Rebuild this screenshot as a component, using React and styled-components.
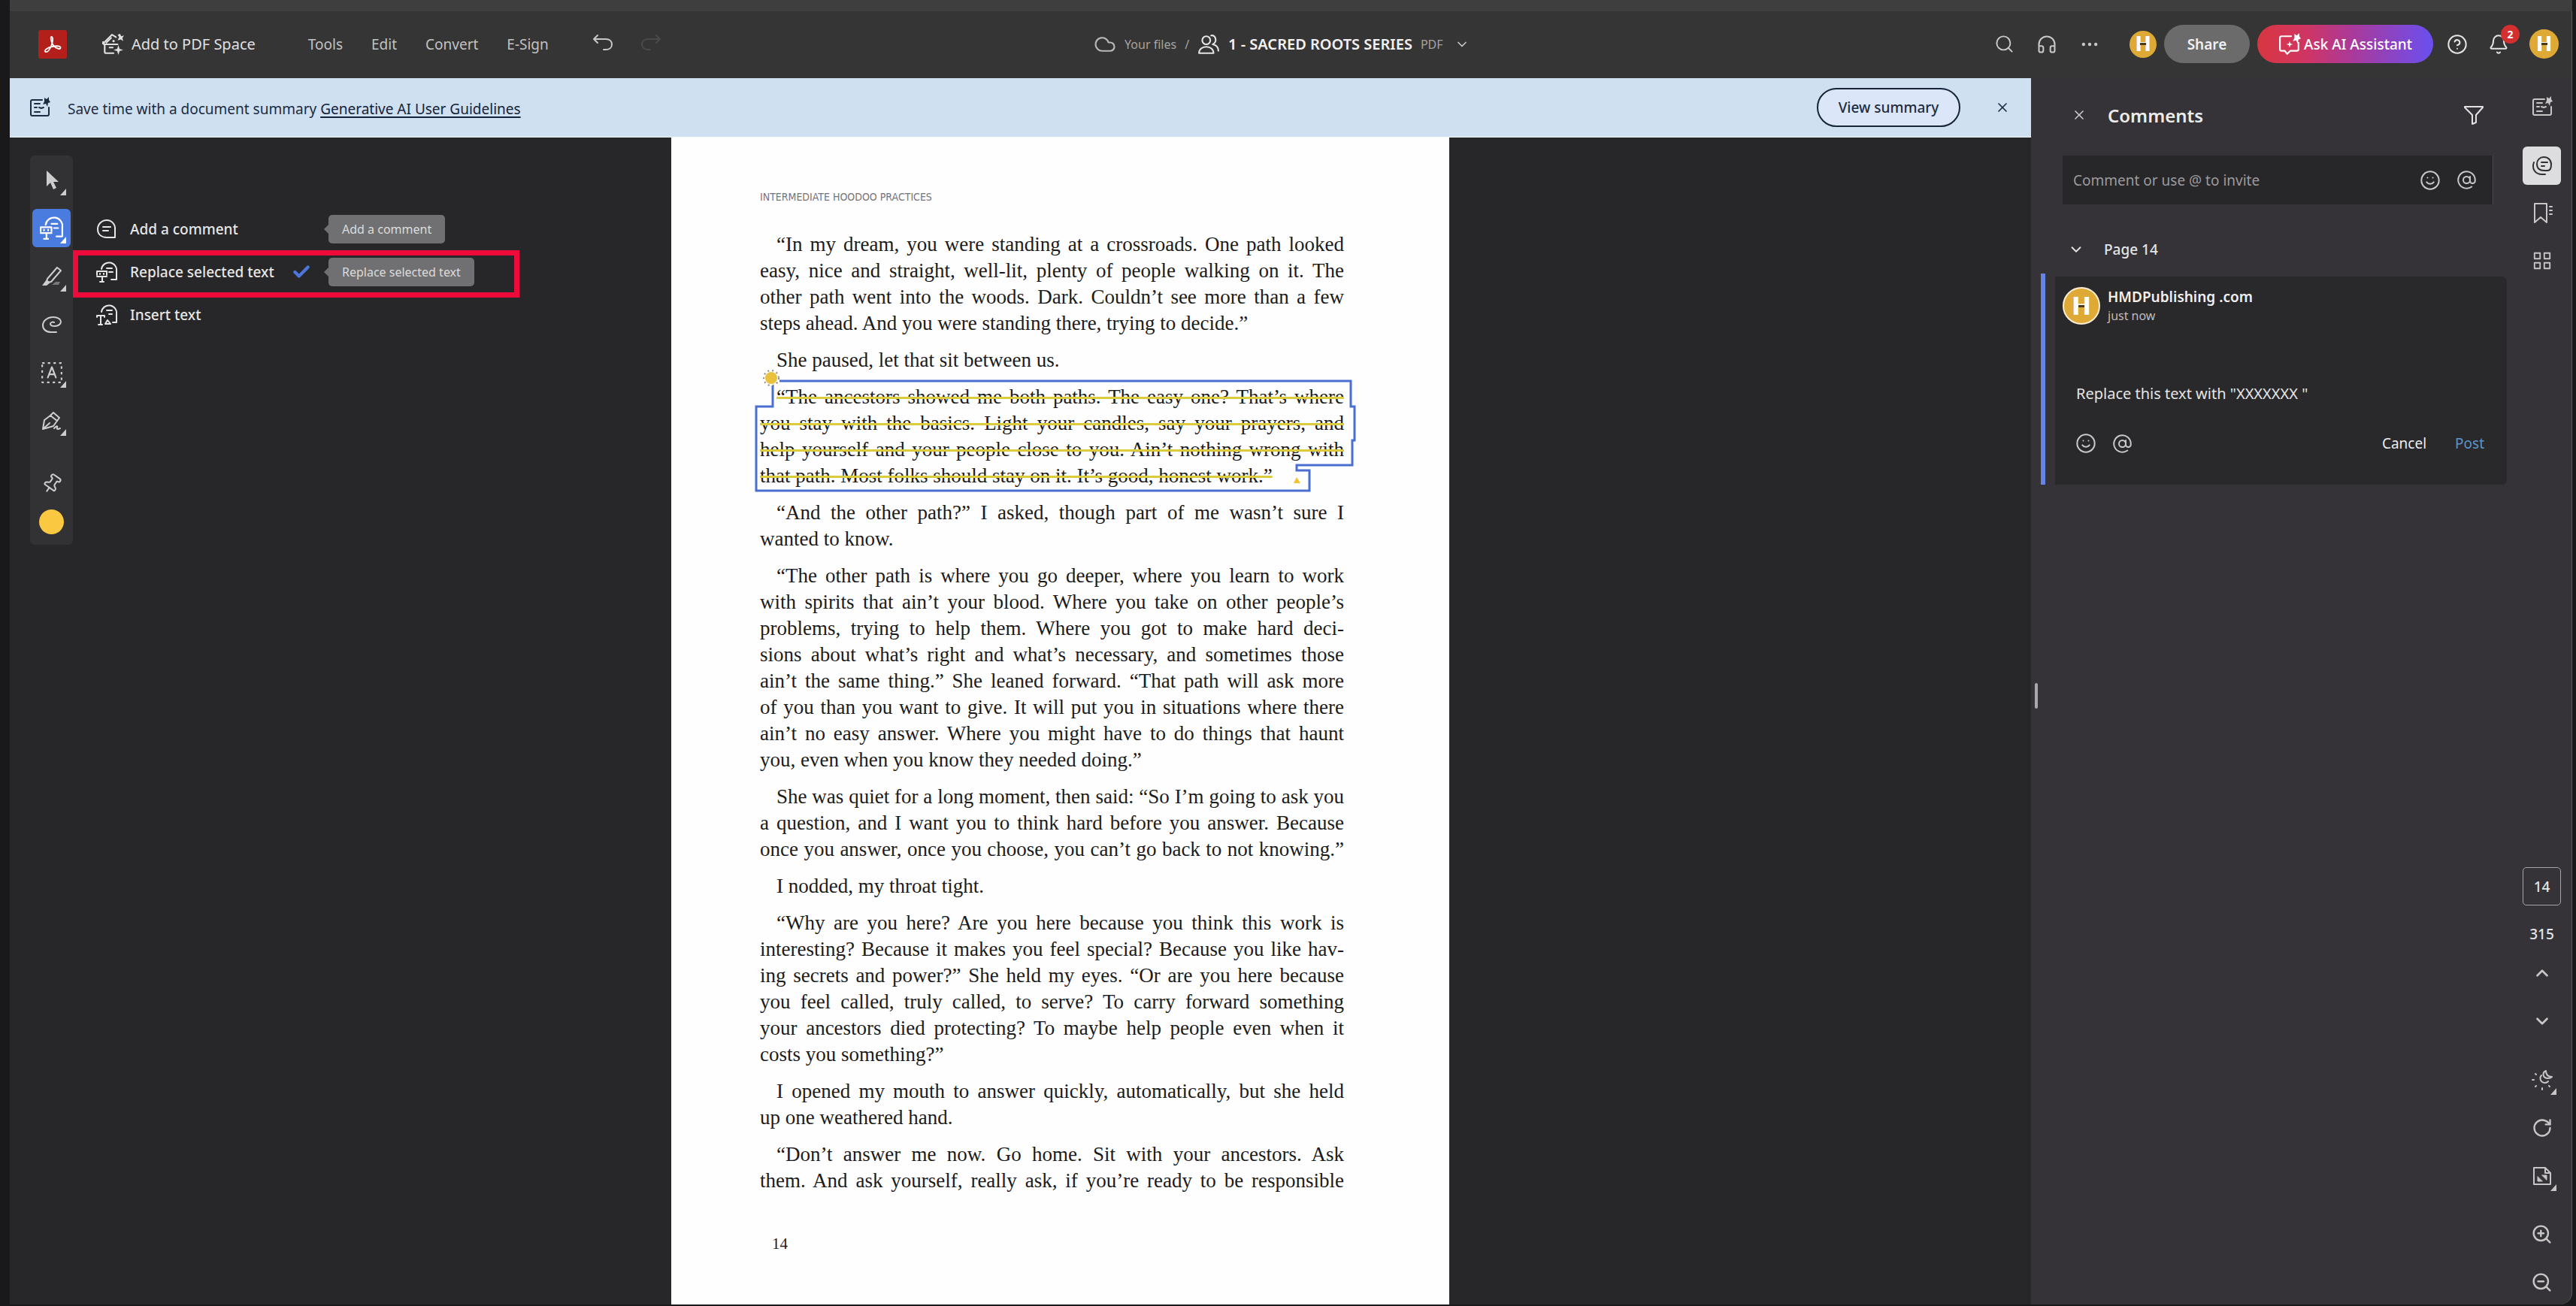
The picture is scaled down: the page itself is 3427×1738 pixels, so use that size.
import React, { useState } from "react";
import styled, { createGlobalStyle } from "styled-components";
import {
  AtSign,
  Bell,
  Check,
  ChevronDown,
  ChevronUp,
  CircleHelp,
  Cloud,
  Ellipsis,
  Headphones,
  Pin,
  RotateCw,
  Search,
  Smile,
  X,
  ZoomIn,
  ZoomOut,
} from "lucide-react";

const GlobalStyle = createGlobalStyle`
  * {
    box-sizing: border-box;
  }
  body {
    margin: 0;
    background: #19191b;
    color: #e4e4e4;
    font-family: "Noto Sans", "Open Sans", sans-serif;
    font-size: 19px;
  }
  button, input, textarea {
    font: inherit;
    color: inherit;
    background: none;
    border: 0;
    padding: 0;
    margin: 0;
    outline: 0;
  }
  button {
    cursor: pointer;
  }
`;

const Frame = styled.div`
  display: flex;
  flex-direction: column;
  min-height: 100vh;
  padding: 0 5px 2px 13px;
`;

const TitleStrip = styled.div`
  height: 15px;
  background: #3e3e3e;
`;

/* ---------- top bar ---------- */

const TopBar = styled.header`
  display: grid;
  grid-template-columns: 34fr auto 35fr;
  align-items: center;
  height: 89px;
  padding: 0 17px 2px 38px;
  background: #353535;
  border-right: 1px solid #5b5b5d;
`;

const Group = styled.div`
  display: flex;
  align-items: center;
  gap: ${(p) => p.$gap}px;
  justify-content: ${(p) => p.$justify || "flex-start"};
`;

const SpaceButton = styled.button`
  display: flex;
  align-items: center;
  gap: 10px;
  margin: 0 32px 0 8px;
  color: #e0e0e0;
  font-size: 20px;
  white-space: nowrap;
`;

const MenuLink = styled.button`
  color: #c2c2c2;
  white-space: nowrap;
`;

const History = styled.div`
  display: flex;
  gap: 36px;
  margin-left: 20px;
`;

const IconButton = styled.button`
  display: flex;
  align-items: center;
  justify-content: center;
  width: ${(p) => p.$size || 28}px;
  height: ${(p) => p.$size || 28}px;
  color: ${(p) => p.$color || "#c8c8c8"};
  position: relative;
`;

const Crumb = styled.a`
  color: #a3a3a3;
  font-size: 16px;
  text-decoration: none;
`;

const DocTitle = styled.h1`
  margin: 0;
  font-size: 20px;
  font-weight: 600;
  color: #f2f2f2;
  white-space: nowrap;
`;

const Small = styled.span`
  color: #a3a3a3;
  font-size: 16px;
`;

const Avatar = styled.span`
  position: relative;
  display: flex;
  align-items: center;
  justify-content: center;
  flex: none;
  width: ${(p) => p.$size}px;
  height: ${(p) => p.$size}px;
  border-radius: 50%;
  border: ${(p) => (p.$ring ? "2px solid #fbeed2" : "0")};
  background: #dfa936;
  color: #fff;
  font-family: Roboto, sans-serif;
  font-weight: 900;
  font-size: ${(p) => (p.$size > 45 ? 34 : 28)}px;
  line-height: 1;

  /* dark notch on the crossbar of the letter */
  &::after {
    content: "";
    position: absolute;
    width: 8px;
    height: 3px;
    background: #4a3a14;
  }
`;

const ShareButton = styled.button`
  width: 114px;
  height: 51px;
  border-radius: 26px;
  background: #6b6b6b;
  color: #f0f0f0;
  font-weight: 600;
  font-size: 19px;
`;

const AskButton = styled.button`
  display: flex;
  align-items: center;
  justify-content: center;
  gap: 4px;
  width: 234px;
  height: 51px;
  border-radius: 26px;
  background: linear-gradient(90deg, #d93640 0%, #cf3563 28%, #a93a9c 55%, #6a4ff0 100%);
  color: #fff;
  font-weight: 500;
  font-size: 19px;
  white-space: nowrap;
`;

const Badge = styled.span`
  position: absolute;
  top: -12px;
  right: -14px;
  width: 25px;
  height: 25px;
  border-radius: 50%;
  background: #d3302f;
  color: #fff;
  font-size: 14px;
  font-weight: 700;
  line-height: 25px;
  text-align: center;
`;

/* ---------- main area ---------- */

const Main = styled.div`
  display: flex;
  flex: 1;
`;

const Viewer = styled.main`
  display: flex;
  flex-direction: column;
  flex: 1;
  min-width: 0;
  background: #272729;
`;

const Banner = styled.div`
  display: flex;
  align-items: center;
  height: 79px;
  padding: 0 20px 0 26px;
  background: #cfe0f1;
  border-bottom: 1px solid #f4fbff;
  color: #1c2c42;
`;

const BannerText = styled.p`
  flex: 1;
  margin: 4px 0 0 23px;
`;

const BannerLink = styled.a`
  color: #14233a;
  text-decoration-thickness: 2px;
  text-underline-offset: 3px;
`;

const SummaryButton = styled.button`
  width: 191px;
  height: 52px;
  margin-right: 38px;
  border: 2px solid #16243a;
  border-radius: 26px;
  background: #dbe7f8;
  font-weight: 500;
`;

const Workspace = styled.div`
  display: flex;
  flex: 1;
  align-items: stretch;
`;

const ToolColumn = styled.nav`
  position: relative;
  flex: none;
  width: 106px;
  padding: 24px 0 0 27px;
`;

const ToolBar = styled.div`
  display: flex;
  flex-direction: column;
  align-items: center;
  gap: 13px;
  width: 57px;
  padding: 7px 3px 5px;
  border-radius: 6px;
  background: #323234;
`;

const Tool = styled.button`
  position: relative;
  display: flex;
  align-items: center;
  justify-content: center;
  width: 51px;
  height: 51px;
  border-radius: 6px;
  background: ${(p) => (p.$active ? "#4a7bde" : "none")};
  color: ${(p) => (p.$active ? "#fff" : "#cdcdcd")};
`;

const PinGroup = styled.div`
  display: flex;
  flex-direction: column;
  margin-top: 20px;
`;

const PinMark = styled(Pin)`
  rotate: 35deg;
`;

const Corner = styled.span`
  position: absolute;
  right: 6px;
  bottom: 5px;
  border-left: 8px solid transparent;
  border-bottom: 9px solid currentColor;
`;

const Swatch = styled.span`
  width: 33px;
  height: 33px;
  border-radius: 50%;
  background: #fbc842;
`;

const Flyout = styled.div`
  position: absolute;
  left: 97px;
  top: 93px;
  z-index: 2;
  padding: 0 0 0 18px;
`;

const FlyoutRow = styled.button`
  display: grid;
  grid-template-columns: 45px 215px 49px auto;
  align-items: center;
  height: 57px;
  color: #e6e6e6;
  text-align: left;
  font-weight: 500;
  white-space: nowrap;
`;

const Tip = styled.span`
  position: relative;
  justify-self: start;
  grid-column: 4;
  height: 38px;
  padding: 0 18px;
  border-radius: 5px;
  background: #707072;
  color: #dcdcdc;
  font-size: 16px;
  font-weight: 400;
  line-height: 38px;

  &::before {
    content: "";
    position: absolute;
    left: -6px;
    top: 13px;
    border: 6px solid transparent;
    border-left: 0;
    border-right-color: #707072;
  }
`;

const RedFrame = styled.div`
  position: absolute;
  left: 84px;
  top: 150px;
  width: 594px;
  height: 63px;
  border: 7px solid #ee0b3b;
  z-index: 3;
  pointer-events: none;
`;

const Canvas = styled.div`
  display: flex;
  justify-content: center;
  flex: 1;
  min-width: 0;
`;

/* ---------- book page ---------- */

const Sheet = styled.article`
  flex: 0 1 1035px;
  padding: 67px 140px 0 118px;
  background: #fefefe;
  color: #1b1b1b;
  font-family: "Liberation Serif", serif;
  font-size: 27px;
`;

const RunningHead = styled.div`
  height: 24px;
  color: #77747a;
  font-family: "Liberation Sans Narrow", "DejaVu Sans Condensed", sans-serif;
  font-size: 14px;
  line-height: 24px;
  margin-bottom: 34px;
`;

const Paragraph = styled.p`
  position: relative;
  margin: 0 0 14px;
`;

const Line = styled.span`
  display: block;
  line-height: 35px;
  white-space: nowrap;
  text-indent: ${(p) => (p.$first ? 22 : 0)}px;
  text-align: justify;
  text-align-last: ${(p) => (p.$last ? "left" : "justify")};
`;

const Struck = styled.s`
  text-decoration: line-through 3px #dccb3c;
`;

const Outline = styled.svg`
  position: absolute;
  left: -10px;
  top: -20px;
  overflow: visible;
`;

const Folio = styled.div`
  margin-top: 50px;
  padding-left: 16px;
  font-size: 21px;
  line-height: 32px;
`;

/* ---------- comments ---------- */

const Panel = styled.aside`
  position: relative;
  flex: 0 0 640px;
  padding: 19px 25px 0 2px;
  background: #353337;
`;

const Handle = styled.div`
  position: absolute;
  left: 5px;
  top: 805px;
  width: 4px;
  height: 34px;
  border-radius: 2px;
  background: #a9a9ab;
`;

const PanelHead = styled.div`
  display: flex;
  align-items: center;
  gap: 18px;
  height: 60px;
  padding: 0 6px 0 42px;
`;

const PanelTitle = styled.h2`
  flex: 1;
  margin: 0;
  font-size: 24px;
  font-weight: 600;
  color: #ececec;
`;

const CommentBox = styled.div`
  display: flex;
  align-items: center;
  gap: 20px;
  height: 65px;
  margin: 24px 0 30px 40px;
  padding: 0 21px 0 14px;
  background: #272629;
  border-right: 1px solid #4a494c;
`;

const CommentInput = styled.input`
  flex: 1;
  min-width: 0;

  &::placeholder {
    color: #9b9a9d;
    opacity: 1;
  }
`;

const PageToggle = styled.button`
  display: flex;
  align-items: center;
  gap: 26px;
  height: 60px;
  padding-left: 47px;
  font-weight: 500;
`;

const Thread = styled.div`
  margin: 2px -18px 0 11px;
  padding: 4px 0 0 13px;
  border-left: 6px solid #6684e6;
`;

const Card = styled.section`
  padding: 14px 30px 39px 10px;
  border-radius: 0 6px 6px 0;
  background: #29282b;
`;

const Author = styled.div`
  font-weight: 600;
  line-height: 26px;
  color: #f0f0f0;
`;

const When = styled.div`
  color: #bdbdbd;
  font-size: 16px;
  line-height: 24px;
`;

const Reply = styled.textarea`
  display: block;
  width: 100%;
  height: 40px;
  margin: 72px 0 30px;
  padding: 6px 0 0 18px;
  resize: none;
  font-size: 20px;
  line-height: 28px;
`;

const CardActions = styled.div`
  display: flex;
  align-items: center;
  gap: 20px;
  height: 32px;
  padding-left: 17px;
`;

const TextButton = styled.button`
  margin-left: ${(p) => (p.$push ? "auto" : "18px")};
  color: ${(p) => (p.$accent ? "#5f93c8" : "#ececec")};
`;

const Rail = styled.nav`
  display: flex;
  flex-direction: column;
  align-items: center;
  justify-content: space-between;
  flex: 0 0 80px;
  padding: 12px 0 4px;
  background: #353337;
  border-right: 1px solid #5b5b5d;
  border-radius: 0 0 16px 0;
`;

const RailGroup = styled.div`
  display: flex;
  flex-direction: column;
  align-items: center;
  gap: ${(p) => p.$gap || 0}px;
`;

const RailTile = styled.button`
  position: relative;
  display: flex;
  align-items: center;
  justify-content: center;
  width: 51px;
  height: 51px;
  border-radius: 6px;
  background: ${(p) => (p.$active ? "#dddcdf" : "none")};
  color: ${(p) => (p.$active ? "#303032" : "#c6c6c6")};
`;

const PageInput = styled.input`
  width: 51px;
  height: 51px;
  border: 1px solid #a5a5a7;
  border-radius: 5px;
  text-align: center;
  font-weight: 500;
`;

const PageCount = styled.span`
  height: 51px;
  line-height: 51px;
  font-weight: 500;
`;

/* ---------- drawings ---------- */

const Svg = ({ size = 28, width = 2, children }) => (
  <svg
    width={size}
    height={size}
    viewBox="0 0 28 28"
    fill="none"
    stroke="currentColor"
    strokeWidth={width}
    strokeLinecap="round"
    strokeLinejoin="round"
    aria-hidden="true"
  >
    {children}
  </svg>
);

const AcrobatLogo = () => (
  <svg width="38" height="38" viewBox="0 0 38 38" aria-label="Acrobat">
    <rect width="38" height="38" rx="3" fill="#b3201b" />
    <path
      d="M17.500 9c2.500 0 2 7-.5 12.500-2 4.500-5 8.500-7.500 7.500s1.500-5.500 9-7c6-1.300 11-1 11 1.500 0 2.800-6 1.500-9.500-3-2.500-3.500-4.500-11.500-2.500-11.500z"
      fill="none"
      stroke="#fff"
      strokeWidth="1.800"
    />
  </svg>
);

const SpaceIcon = () => (
  <Svg size={30}>
    <path d="M2 13 13 2l5 3" />
    <path d="M2 13v-2M6 12l6-6" />
    <path d="M3 14h17" />
    <path d="M15 25H6a2 2 0 0 1-2-2v-9" />
    <path d="M10 18h4" />
    <path d="m21 15 1.500 4.500L27 21l-4.500 1.500L21 27l-1.500-4.500L15 21l4.500-1.500z" fill="currentColor" stroke="none" />
    <path d="m23 1 1.500 3L28 3l-2 3 1 4-3-2-4 1 2-4-2-3z" fill="currentColor" stroke="none" />
    <circle cx="15" cy="10" r="1.500" fill="currentColor" stroke="none" />
  </Svg>
);

const SummaryIcon = () => (
  <Svg>
    <path d="M17 4H4a2 2 0 0 0-2 2v17a2 2 0 0 0 2 2h20a2 2 0 0 0 2-2V14" />
    <path d="M7 9h7M7 14h3M7 20h7M13 14l3 1 3-1" />
    <path d="m20 1 3 2 3-3v4l2 3-3 1-1 5-2-4-4 1 2-4z" fill="currentColor" stroke="none" />
  </Svg>
);

const AssistantIcon = () => (
  <Svg size={30}>
    <path d="M16 4H4a2 2 0 0 0-2 2v14a2 2 0 0 0 2 2h4l3 4 4-4h8a2 2 0 0 0 2-2v-8" />
    <path d="m20 1 3 2 3-3v4l2 3-3 1-1 5-2-4-4 1 2-4z" fill="currentColor" stroke="none" />
    <path d="m14 10 1 3 3 1-3 1-1 3-1-3-3-1 3-1z" fill="currentColor" stroke="none" />
  </Svg>
);

const ArrowIcon = () => (
  <Svg>
    <path d="M7 1v21l5-5 4 9 4-2-4-8h7z" fill="currentColor" stroke="none" />
  </Svg>
);

const NoteIcon = () => (
  <Svg>
    <path d="M14 2a12 12 0 0 0-12 12c0 7 5 11 12 11h11V14A11 11 0 0 0 14 2z" />
    <path d="M9 11h10M9 16h7" />
  </Svg>
);

const ReplaceIcon = ({ size }) => (
  <Svg size={size}>
    <path d="M7 10a10 10 0 0 1 20 3v11h-7" />
    <path d="M14 9h7M17 14h5" />
    <path d="M1 13h13M1 13v5M14 13v5M5 17v-1M10 17v-1M1 20h13M8 20v7M5 27h5" />
  </Svg>
);

const InsertIcon = () => (
  <Svg>
    <path d="M7 10a10 10 0 0 1 20 3v11h-5" />
    <path d="M14 8h7M17 13h4" />
    <path d="M1 17v-2h10v2M6 15v12M3 27h5" />
    <path d="m12 26 3-5 4 5z" />
  </Svg>
);

const MarkerIcon = () => (
  <Svg>
    <path d="M21 2 26 6 13 21l-6 1 1-5z" />
    <path d="M7 18l5 4-5 4H1z" fill="currentColor" stroke="none" />
    <path d="M14 25h9l2-4h-6z" fill="#77777a" stroke="none" />
  </Svg>
);

const LoopIcon = () => (
  <Svg>
    <path d="M20 24h-7C6 24 2 20 2 15 2 9 8 4 16 4c6 0 10 3 10 6s-3 6-8 6c-4 0-6-1-6-3s3-3 5-2" />
  </Svg>
);

const TextSelectIcon = () => (
  <Svg size={30}>
    <path d="M2 2h24v24H2z" strokeDasharray="3 4" strokeLinecap="butt" />
    <path d="m9 20 5-13 5 13M11 16h6" />
  </Svg>
);

const PenIcon = () => (
  <Svg>
    <path d="M2 25 4 13l8-6 9 7-5 7zM2 25l9-8" />
    <path d="m12 7 4-4 8 7-3 4" />
    <path d="M17 24c3-3 5-4 4-1s2 2 4 1" />
  </Svg>
);

const FilterIcon = () => (
  <Svg>
    <path d="M2 3h24v1l-9 10v10l-5 2V14L2 4z" />
  </Svg>
);

const ThreadsIcon = () => (
  <Svg>
    <path d="M16 2a9 9 0 0 0-9 9c0 6 4 9 10 9h4c3 0 5-3 5-8 0-6-4-10-10-10z" />
    <path d="M13 9h8M13 14h4" />
    <path d="M3 9c-3 8 1 16 11 16h4" />
  </Svg>
);

const BookmarkListIcon = () => (
  <Svg>
    <path d="M4 1h16v25l-8-7-8 7zM24 5h3M24 10h3M24 15h3" />
  </Svg>
);

const TilesIcon = () => (
  <Svg size={26}>
    <path d="M3 3h8v8H3zM17 3h8v8h-8zM3 17h8v8H3zM17 17h8v8h-8z" />
  </Svg>
);

const DayNightIcon = () => (
  <Svg>
    <path d="M13 8a6 6 0 1 0 9 8" />
    <path d="M19 2c-5 2-5 10 3 10 2 0 4-1 5-2-5 0-8-3-8-8z" />
    <path d="M1 14h2M5 6l1 1M5 23l1-1M14 25v2M23 22l1 1" />
  </Svg>
);

const FitIcon = () => (
  <Svg>
    <path d="M3 3h15l7 7v15H3zM18 3v7h7" />
    <path d="M14 13h6v6zM14 21H8v-6z" fill="currentColor" strokeWidth="1" />
  </Svg>
);

const UndoIcon = () => (
  <Svg>
    <path d="M7 2 2 7l5 5M2 7h16c5 0 8 3 8 7s-3 7-8 7h-3" />
  </Svg>
);

const RedoIcon = () => (
  <Svg>
    <path d="m21 2 5 5-5 5M26 7H10c-5 0-8 3-8 7s3 7 8 7h3" />
  </Svg>
);

/* ---------- content ---------- */

const paragraphs = [
  [
    "“In my dream, you were standing at a crossroads. One path looked",
    "easy, nice and straight, well-lit, plenty of people walking on it. The",
    "other path went into the woods. Dark. Couldn’t see more than a few",
    "steps ahead. And you were standing there, trying to decide.”",
  ],
  ["She paused, let that sit between us."],
  [
    "“The ancestors showed me both paths. The easy one? That’s where",
    "you stay with the basics. Light your candles, say your prayers, and",
    "help yourself and your people close to you. Ain’t nothing wrong with",
    "that path. Most folks should stay on it. It’s good, honest work.”",
  ],
  ["“And the other path?” I asked, though part of me wasn’t sure I", "wanted to know."],
  [
    "“The other path is where you go deeper, where you learn to work",
    "with spirits that ain’t your blood. Where you take on other people’s",
    "problems, trying to help them. Where you got to make hard deci-",
    "sions about what’s right and what’s necessary, and sometimes those",
    "ain’t the same thing.” She leaned forward. “That path will ask more",
    "of you than you want to give. It will put you in situations where there",
    "ain’t no easy answer. Where you might have to do things that haunt",
    "you, even when you know they needed doing.”",
  ],
  [
    "She was quiet for a long moment, then said: “So I’m going to ask you",
    "a question, and I want you to think hard before you answer. Because",
    "once you answer, once you choose, you can’t go back to not knowing.”",
  ],
  ["I nodded, my throat tight."],
  [
    "“Why are you here? Are you here because you think this work is",
    "interesting? Because it makes you feel special? Because you like hav-",
    "ing secrets and power?” She held my eyes. “Or are you here because",
    "you feel called, truly called, to serve? To carry forward something",
    "your ancestors died protecting? To maybe help people even when it",
    "costs you something?”",
  ],
  ["I opened my mouth to answer quickly, automatically, but she held", "up one weathered hand."],
  [
    "“Don’t answer me now. Go home. Sit with your ancestors. Ask",
    "them. And ask yourself, really ask, if you’re ready to be responsible",
  ],
];

const STRUCK = 2;
const LAST = paragraphs.length - 1;
// closing lines that fill the whole measure stay justified
const isRagged = (p, i, lines) => i === lines.length - 1 && p !== LAST && p !== 5;

const StrikeOutline = () => (
  <Outline width="806" height="170" viewBox="0 0 806 170" fill="none" aria-hidden="true">
    <path
      d="M36 16H796V50H801V95H798V128H724V135H741V162H5V50H27V22"
      stroke="#4a6fd0"
      strokeWidth="3"
    />
    <circle cx="25" cy="12" r="8" fill="#e8c23c" />
    <circle cx="25" cy="12" r="10" stroke="#8d8a78" strokeWidth="2" strokeDasharray="2 4" />
    <path d="m720 152 4-8 5 8z" fill="#f2c230" />
  </Outline>
);

const App = () => {
  const [comment, setComment] = useState("");
  const [reply, setReply] = useState('Replace this text with "XXXXXXX "');
  const [page, setPage] = useState("14");

  return (
    <>
      <GlobalStyle />
      <Frame>
        <TitleStrip />
        <TopBar>
          <Group $gap={38}>
            <AcrobatLogo />
            <SpaceButton>
              <SpaceIcon />
              Add to PDF Space
            </SpaceButton>
            <MenuLink>Tools</MenuLink>
            <MenuLink>Edit</MenuLink>
            <MenuLink>Convert</MenuLink>
            <MenuLink>E-Sign</MenuLink>
            <History>
              <IconButton aria-label="Undo">
                <UndoIcon />
              </IconButton>
              <IconButton aria-label="Redo" $color="#4a4a4a">
                <RedoIcon />
              </IconButton>
            </History>
          </Group>
          <Group $gap={11}>
            <Cloud size={30} color="#b9b9b9" strokeWidth={1.75} />
            <Crumb href="#files">Your files</Crumb>
            <Small>/</Small>
            <Svg size={30}>
              <circle cx="11" cy="9" r="5" />
              <path d="M2 25c0-5 4-8 9-8s9 3 9 8zM17 3c6-1 8 8 2 11 5 1 7 4 7 8" />
            </Svg>
            <DocTitle>1 - SACRED ROOTS SERIES</DocTitle>
            <Small>PDF</Small>
            <IconButton aria-label="File menu">
              <ChevronDown size={20} />
            </IconButton>
          </Group>
          <Group $gap={39} $justify="flex-end">
            <Group $gap={29}>
              <IconButton aria-label="Search">
                <Search size={27} strokeWidth={1.75} />
              </IconButton>
              <IconButton aria-label="Listen">
                <Headphones size={30} strokeWidth={1.75} />
              </IconButton>
              <IconButton aria-label="More">
                <Ellipsis size={28} strokeWidth={1.75} />
              </IconButton>
            </Group>
            <Group $gap={18}>
              <Group $gap={10}>
                <Avatar $size={36}>H</Avatar>
                <ShareButton>Share</ShareButton>
                <AskButton>
                  <AssistantIcon />
                  Ask AI Assistant
                </AskButton>
              </Group>
              <Group $gap={27}>
                <IconButton aria-label="Help" $color="#e6e6e6">
                  <CircleHelp size={32} strokeWidth={1.75} />
                </IconButton>
                <IconButton aria-label="Notifications" $color="#e6e6e6">
                  <Bell size={28} strokeWidth={1.75} />
                  <Badge>2</Badge>
                </IconButton>
                <Avatar $size={39}>H</Avatar>
              </Group>
            </Group>
          </Group>
        </TopBar>

        <Main>
          <Viewer>
            <Banner>
              <SummaryIcon />
              <BannerText>
                Save time with a document summary{" "}
                <BannerLink href="#guidelines">Generative AI User Guidelines</BannerLink>
              </BannerText>
              <SummaryButton>View summary</SummaryButton>
              <IconButton $size={36} $color="#1c2c42" aria-label="Dismiss">
                <X size={20} />
              </IconButton>
            </Banner>

            <Workspace>
              <ToolColumn>
                <ToolBar>
                  <Tool aria-label="Select">
                    <ArrowIcon />
                    <Corner />
                  </Tool>
                  <Tool $active aria-label="Comment">
                    <ReplaceIcon size={31} />
                    <Corner />
                  </Tool>
                  <Tool aria-label="Highlight">
                    <MarkerIcon />
                    <Corner />
                  </Tool>
                  <Tool aria-label="Draw">
                    <LoopIcon />
                  </Tool>
                  <Tool aria-label="Add text">
                    <TextSelectIcon />
                    <Corner />
                  </Tool>
                  <Tool aria-label="Sign">
                    <PenIcon />
                    <Corner />
                  </Tool>
                  <PinGroup>
                    <Tool aria-label="Pin toolbar">
                      <PinMark size={28} strokeWidth={1.75} />
                    </Tool>
                    <Tool aria-label="Color">
                      <Swatch />
                    </Tool>
                  </PinGroup>
                </ToolBar>
                <Flyout>
                  <FlyoutRow>
                    <NoteIcon />
                    Add a comment
                    <Tip>Add a comment</Tip>
                  </FlyoutRow>
                  <FlyoutRow>
                    <ReplaceIcon />
                    Replace selected text
                    <Check size={26} color="#4d76dd" strokeWidth={4} />
                    <Tip>Replace selected text</Tip>
                  </FlyoutRow>
                  <FlyoutRow>
                    <InsertIcon />
                    Insert text
                  </FlyoutRow>
                </Flyout>
                <RedFrame />
              </ToolColumn>

              <Canvas>
                <Sheet>
                  <RunningHead>INTERMEDIATE HOODOO PRACTICES</RunningHead>
                  {paragraphs.map((lines, p) => (
                    <Paragraph key={p}>
                      {lines.map((text, i) => (
                        <Line key={i} $first={i === 0} $last={isRagged(p, i, lines)}>
                          {p === STRUCK ? <Struck>{text}</Struck> : text}
                        </Line>
                      ))}
                      {p === STRUCK && <StrikeOutline />}
                    </Paragraph>
                  ))}
                  <Folio>14</Folio>
                </Sheet>
              </Canvas>
            </Workspace>
          </Viewer>

          <Panel>
            <Handle />
            <PanelHead>
              <IconButton $size={40} aria-label="Close comments">
                <X size={20} />
              </IconButton>
              <PanelTitle>Comments</PanelTitle>
              <IconButton $size={40} $color="#e2e2e2" aria-label="Filter">
                <FilterIcon />
              </IconButton>
            </PanelHead>
            <CommentBox>
              <CommentInput
                aria-label="Comment"
                placeholder="Comment or use @ to invite"
                value={comment}
                onChange={(e) => setComment(e.target.value)}
              />
              <IconButton aria-label="Emoji">
                <Smile size={28} strokeWidth={1.75} />
              </IconButton>
              <IconButton aria-label="Mention">
                <AtSign size={27} strokeWidth={1.75} />
              </IconButton>
            </CommentBox>
            <PageToggle>
              <ChevronDown size={22} />
              Page 14
            </PageToggle>
            <Thread>
              <Card>
                <Group $gap={10}>
                  <Avatar $size={50} $ring>
                    H
                  </Avatar>
                  <div>
                    <Author>HMDPublishing .com</Author>
                    <When>just now</When>
                  </div>
                </Group>
                <Reply aria-label="Reply" value={reply} onChange={(e) => setReply(e.target.value)} />
                <CardActions>
                  <IconButton aria-label="Emoji">
                    <Smile size={28} strokeWidth={1.75} />
                  </IconButton>
                  <IconButton aria-label="Mention">
                    <AtSign size={27} strokeWidth={1.75} />
                  </IconButton>
                  <TextButton $push>Cancel</TextButton>
                  <TextButton $accent>Post</TextButton>
                </CardActions>
              </Card>
            </Thread>
          </Panel>

          <Rail>
            <RailGroup $gap={28}>
              <RailTile aria-label="Summary">
                <SummaryIcon />
              </RailTile>
              <RailGroup $gap={12}>
                <RailTile $active aria-label="Comments">
                  <ThreadsIcon />
                </RailTile>
                <RailTile aria-label="Bookmarks">
                  <BookmarkListIcon />
                </RailTile>
                <RailTile aria-label="Thumbnails">
                  <TilesIcon />
                </RailTile>
              </RailGroup>
            </RailGroup>
            <RailGroup $gap={27}>
              <RailGroup>
                <RailGroup $gap={13}>
                  <PageInput aria-label="Page" value={page} onChange={(e) => setPage(e.target.value)} />
                  <PageCount>315</PageCount>
                </RailGroup>
                <RailGroup $gap={13}>
                  <RailTile aria-label="Previous page">
                    <ChevronUp size={26} strokeWidth={2.5} />
                  </RailTile>
                  <RailTile aria-label="Next page">
                    <ChevronDown size={26} strokeWidth={2.5} />
                  </RailTile>
                </RailGroup>
              </RailGroup>
              <RailGroup $gap={13}>
                <RailTile aria-label="Display theme">
                  <DayNightIcon />
                  <Corner />
                </RailTile>
                <RailTile aria-label="Rotate">
                  <RotateCw size={28} strokeWidth={2} />
                </RailTile>
                <RailTile aria-label="Page display">
                  <FitIcon />
                  <Corner />
                </RailTile>
              </RailGroup>
              <RailGroup $gap={13}>
                <RailTile aria-label="Zoom in">
                  <ZoomIn size={29} />
                </RailTile>
                <RailTile aria-label="Zoom out">
                  <ZoomOut size={29} />
                </RailTile>
              </RailGroup>
            </RailGroup>
          </Rail>
        </Main>
      </Frame>
    </>
  );
};

export default App;
